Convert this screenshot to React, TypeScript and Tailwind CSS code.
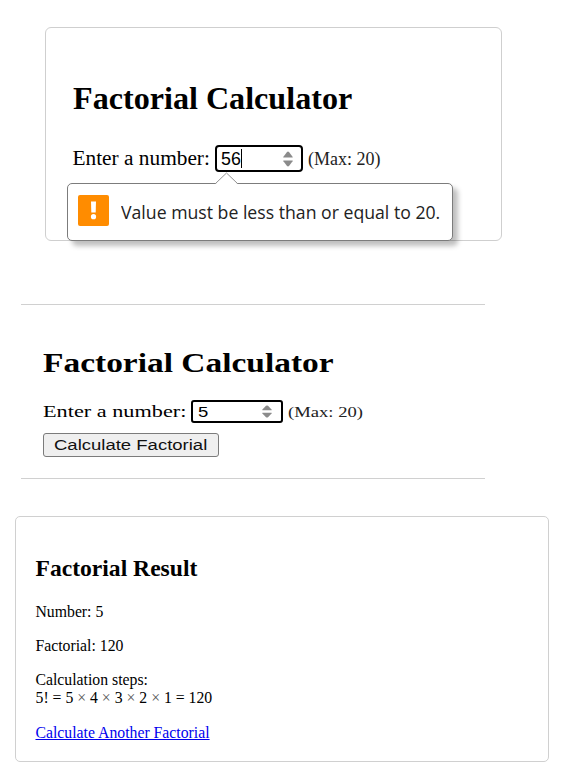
function Spinner({ flat = false }: { flat?: boolean }) {
  return (
    <svg
      className={flat ? "h-[13px] w-[10px]" : "h-[16px] w-[10px]"}
      viewBox="0 0 10 17"
      preserveAspectRatio="none"
      fill="#8b8b8b"
    >
      <path d="M0.5 7 Q0 7 0.4 6 L4 1 Q5 0 6 1 L9.6 6 Q10 7 9.5 7 Z" />
      <path d="M0.5 10 Q0 10 0.4 11 L4 16 Q5 17 6 16 L9.6 11 Q10 10 9.5 10 Z" />
    </svg>
  );
}

function ValidationBubble() {
  return (
    <div className="absolute left-[21px] top-[155px] flex h-[58px] w-[386px] items-center rounded-[5px] border border-[#7c7c7c] bg-white pl-[10px] shadow-[5px_5px_5px_rgba(0,0,0,0.25)]">
      <svg className="absolute left-[147px] top-[-12px] h-[13px] w-[23px]" viewBox="0 0 23 13">
        <path d="M0.5 13 V12 L11.5 1 L22.5 12 V13 Z" fill="white" />
        <path d="M0.5 11.5 L11.5 1 L22.5 11.5" fill="none" stroke="#929292" />
      </svg>
      <svg className="mb-[3px] h-[31px] w-[31px] shrink-0" viewBox="0 0 31 31">
        <rect width="31" height="31" rx="2" fill="#ff8c00" />
        <path d="M13 6.5 H18 L17.7 17.5 H13.3 Z" fill="white" />
        <circle cx="15.5" cy="21.7" r="2.6" fill="white" />
      </svg>
      <span className="ml-[12px] origin-left scale-x-[0.981] whitespace-nowrap font-['Open_Sans','Noto_Sans',sans-serif] text-[18px] leading-6 text-[#222]">
        Value must be less than or equal to 20.
      </span>
    </div>
  );
}

function Times() {
  return <span className="text-[#555]">×</span>;
}

export default function App() {
  return (
    <main className="flex h-[771px] w-[564px] flex-col overflow-hidden bg-white font-['Liberation_Serif',serif] text-black">
      <section className="relative ml-[45px] mt-[27px] h-[214px] w-[457px] shrink-0 rounded-[6px] border border-[#cfcfcf] pl-[26.5px] pt-[52px]">
        <h2 className="w-[279px] origin-left scale-x-[1.004] whitespace-nowrap text-[32px] font-bold leading-9">
          Factorial Calculator
        </h2>
        <div className="mt-[29px] flex h-[27px] items-center">
          <label className="w-[142.5px] whitespace-nowrap pb-px text-[21.33px] leading-6">Enter a number:</label>
          <div className="flex h-[27px] w-[88px] items-center justify-between rounded-[4px] border-2 border-black pl-[4px] pr-[8px]">
            <span className="flex items-center font-['Liberation_Sans',sans-serif] text-[17.8px] leading-5">
              56
              <i className="h-[19px] w-px bg-black" />
            </span>
            <Spinner />
          </div>
          <span className="ml-[5px] whitespace-nowrap text-[18px] leading-5 text-[#222]">(Max: 20)</span>
        </div>
        <ValidationBubble />
      </section>

      <section className="ml-[21px] mt-[63px] h-[175px] w-[464px] shrink-0 border-y border-[#d0d0d0] pl-[22px] pt-[43px]">
        <h2 className="w-[230px] origin-left scale-x-[1.262] whitespace-nowrap text-[26.5px] font-bold leading-[30px]">
          Factorial Calculator
        </h2>
        <div className="mt-[22px] flex h-[23px] items-center">
          <label className="w-[148px] whitespace-nowrap pb-px text-[17.6px] leading-5">
            <span className="inline-block origin-left scale-x-[1.265]">Enter a number:</span>
          </label>
          <div className="flex h-[23px] w-[92px] items-center justify-between rounded-[3px] border-2 border-black pl-[5px] pr-[9px]">
            <span className="origin-left scale-x-[1.26] font-['Liberation_Sans',sans-serif] text-[14.7px] leading-4">5</span>
            <Spinner flat />
          </div>
          <span className="ml-[5px] origin-left scale-x-[1.25] whitespace-nowrap text-[14.9px] leading-4 text-[#222]">
            (Max: 20)
          </span>
        </div>
        <button className="mt-[10px] flex h-[24px] w-[176px] items-center rounded-[3px] border border-[#7b7b7b] bg-[#efefef] pb-px pl-[10px] font-['Liberation_Sans',sans-serif] text-[14.7px] leading-4 text-[#111]">
          <span className="origin-left scale-x-[1.26] whitespace-nowrap">Calculate Factorial</span>
        </button>
      </section>

      <section className="ml-[15px] mt-[37px] h-[246px] w-[534px] shrink-0 rounded-[5px] border border-[#d0d0d0] pl-[19.5px] pt-[37px] text-[15.75px] leading-[18px]">
        <h2 className="text-[23.6px] font-bold leading-7">Factorial Result</h2>
        <p className="mt-[21px]">Number: 5</p>
        <p className="mt-[16px]">Factorial: 120</p>
        <p className="mt-[16px]">
          Calculation steps:
          <br />
          5! = 5 <Times /> 4 <Times /> 3 <Times /> 2 <Times /> 1 = 120
        </p>
        <p className="mt-[17px]">
          <a href="#" className="text-[#0000ee] underline">
            Calculate Another Factorial
          </a>
        </p>
      </section>
    </main>
  );
}
